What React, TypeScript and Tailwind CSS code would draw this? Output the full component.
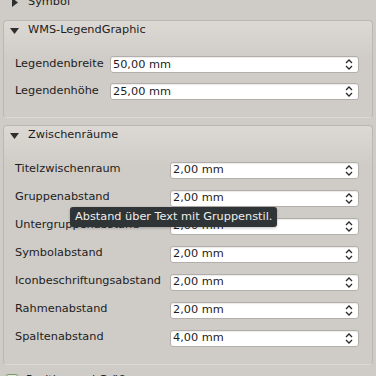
const font = { fontFamily: '"DejaVu Sans", "Noto Sans CJK SC", sans-serif' }

function Spin({ value }: { value: string }) {
  return (
    <div className="flex h-[17px] flex-1 items-center rounded-[3px] border border-[#b3aea9] bg-white pl-[2px] pr-[5px] shadow-[inset_0_1px_1px_rgba(0,0,0,0.08)]">
      <span className="flex-1 leading-none text-[#1d1d1d]">{value}</span>
      <svg width="8" height="13" viewBox="0 0 8 13" className="shrink-0">
        <path d="M1 5 L4 2 L7 5" fill="none" stroke="#2a2a2a" strokeWidth="1.3" />
        <path d="M1 8 L4 11 L7 8" fill="none" stroke="#2a2a2a" strokeWidth="1.3" />
      </svg>
    </div>
  )
}

function Row({ label, value, labelWidth, height }: { label: string; value: string; labelWidth: string; height: string }) {
  return (
    <div className={`flex ${height} items-center`}>
      <span className={`${labelWidth} -mt-[1px] shrink-0 text-[#1d1d1d]`}>{label}</span>
      <Spin value={value} />
    </div>
  )
}

function Group({ title, children }: { title: string; children: React.ReactNode }) {
  return (
    <div className="mx-[3px] rounded-[4px] border border-[#bcb7b2] border-b-transparent bg-gradient-to-b from-[#dcd8d4] to-[#cfcbc7] to-[40px]">
      <div className="flex h-[19px] items-center gap-[9px] pl-[6px]">
        <svg width="9" height="6" viewBox="0 0 9 6">
          <path d="M0 0 L9 0 L4.5 6 Z" fill="#2e2e2e" />
        </svg>
        <span className="text-[#1d1d1d]">{title}</span>
      </div>
      {children}
    </div>
  )
}

export default function App() {
  const gaps = [
    ['Titelzwischenraum', '2,00 mm'],
    ['Gruppenabstand', '2,00 mm'],
    ['Untergruppenabstand', '2,00 mm'],
    ['Symbolabstand', '2,00 mm'],
    ['Iconbeschriftungsabstand', '2,00 mm'],
    ['Rahmenabstand', '2,00 mm'],
    ['Spaltenabstand', '4,00 mm'],
  ]

  return (
    <div style={font} className="relative h-[376px] w-[376px] overflow-hidden bg-[#cfcbc7] text-[11.3px]">
      {/* Symbol (abgeschnitten) */}
      <div className="-mt-[7px] flex h-[19px] items-center gap-[10px] pl-[12px]">
        <svg width="6" height="9" viewBox="0 0 6 9">
          <path d="M0 0 L6 4.5 L0 9 Z" fill="#2e2e2e" />
        </svg>
        <span className="text-[#1d1d1d]">Symbol</span>
      </div>

      <div className="mt-[8px]">
        <Group title="WMS-LegendGraphic">
          <div className="pl-[11px] pr-[13px] pt-[11px] pb-[12px]">
            <Row label="Legendenbreite" value="50,00 mm" labelWidth="w-[95px]" height="h-[27px]" />
            <Row label="Legendenhöhe" value="25,00 mm" labelWidth="w-[95px]" height="h-[27px]" />
          </div>
        </Group>
      </div>

      <div className="mt-[7px]">
        <Group title="Zwischenräume">
          <div className="pl-[11px] pr-[13px] pt-[11px] pb-[12px]">
            {gaps.map(([l, v]) => (
              <Row key={l} label={l} value={v} labelWidth="w-[155px]" height="h-[28px]" />
            ))}
          </div>
        </Group>
      </div>

      {/* Position und Größe (abgeschnitten) */}
      <div className="mt-[7px] flex items-center gap-[8px] pl-[6px]">
        <div className="h-[12px] w-[12px] rounded-[2px] border border-[#7a9a6a] bg-[#e6e3e0]" />
        <span className="text-[#1d1d1d]">Position und Größe</span>
      </div>

      {/* Tooltip */}
      <div className="absolute left-[70px] top-[207px] flex h-[20px] items-center rounded-[3px] bg-[#2f3436] px-[5px] text-[#eeeeec] shadow-[0_1px_3px_rgba(0,0,0,0.25)]">
        Abstand über Text mit Gruppenstil.
      </div>
    </div>
  )
}
